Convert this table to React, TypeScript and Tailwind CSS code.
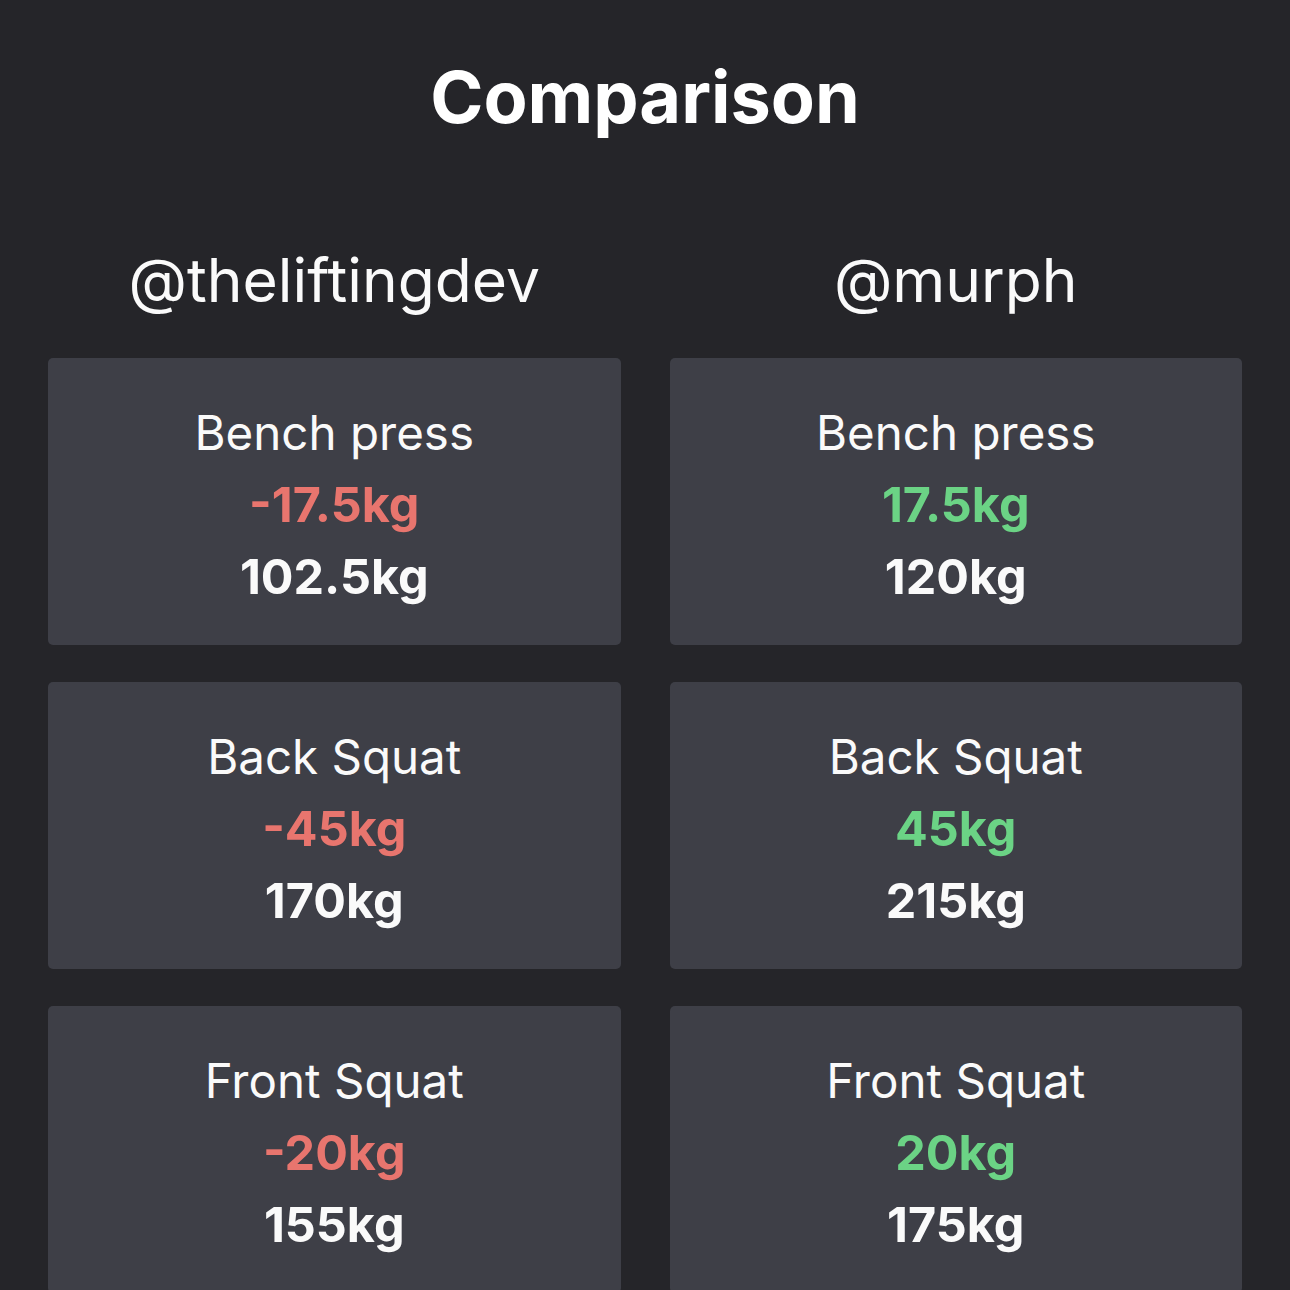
import React from "react";

type Lift = { name: string; diff: string; total: string };

const left: Lift[] = [
  { name: "Bench press", diff: "-17.5kg", total: "102.5kg" },
  { name: "Back Squat", diff: "-45kg", total: "170kg" },
  { name: "Front Squat", diff: "-20kg", total: "155kg" },
];
const right: Lift[] = [
  { name: "Bench press", diff: "17.5kg", total: "120kg" },
  { name: "Back Squat", diff: "45kg", total: "215kg" },
  { name: "Front Squat", diff: "20kg", total: "175kg" },
];

function Card({ lift, positive }: { lift: Lift; positive: boolean }) {
  return (
    <div className="bg-[#3e3f47] rounded-[5px] h-[287px] pt-[6px] flex flex-col items-center justify-center">
      <div className="text-[47.5px] leading-[73px] font-normal text-[#fafafa]">{lift.name}</div>
      <div
        className={
          positive
            ? "text-[48.5px] leading-[72px] font-bold text-[#6bd385]"
            : "text-[48.5px] leading-[72px] font-bold text-[#e8756e]"
        }
      >
        {lift.diff}
      </div>
      <div className="text-[48.5px] leading-[72px] font-bold text-[#fafafa]">{lift.total}</div>
    </div>
  );
}

function Column({ user, lifts, positive }: { user: string; lifts: Lift[]; positive: boolean }) {
  return (
    <div className="flex flex-col flex-1">
      <div className="text-[60.5px] leading-[78px] text-[#fafafa] text-center mb-[39px]">{user}</div>
      <div className="flex flex-col gap-[37px]">
        {lifts.map((l) => (
          <Card key={l.name} lift={l} positive={positive} />
        ))}
      </div>
    </div>
  );
}

export default function App() {
  return (
    <div
      className="w-[1290px] h-[1290px] overflow-hidden bg-[#252529] px-[48px]"
      style={{ fontFamily: "Inter, 'Noto Sans', sans-serif" }}
    >
      <h1 className="text-[72px] leading-[88px] font-bold text-white text-center pt-[53px]">
        Comparison
      </h1>
      <div className="flex gap-[49px] mt-[100px]">
        <Column user="@theliftingdev" lifts={left} positive={false} />
        <Column user="@murph" lifts={right} positive={true} />
      </div>
    </div>
  );
}
